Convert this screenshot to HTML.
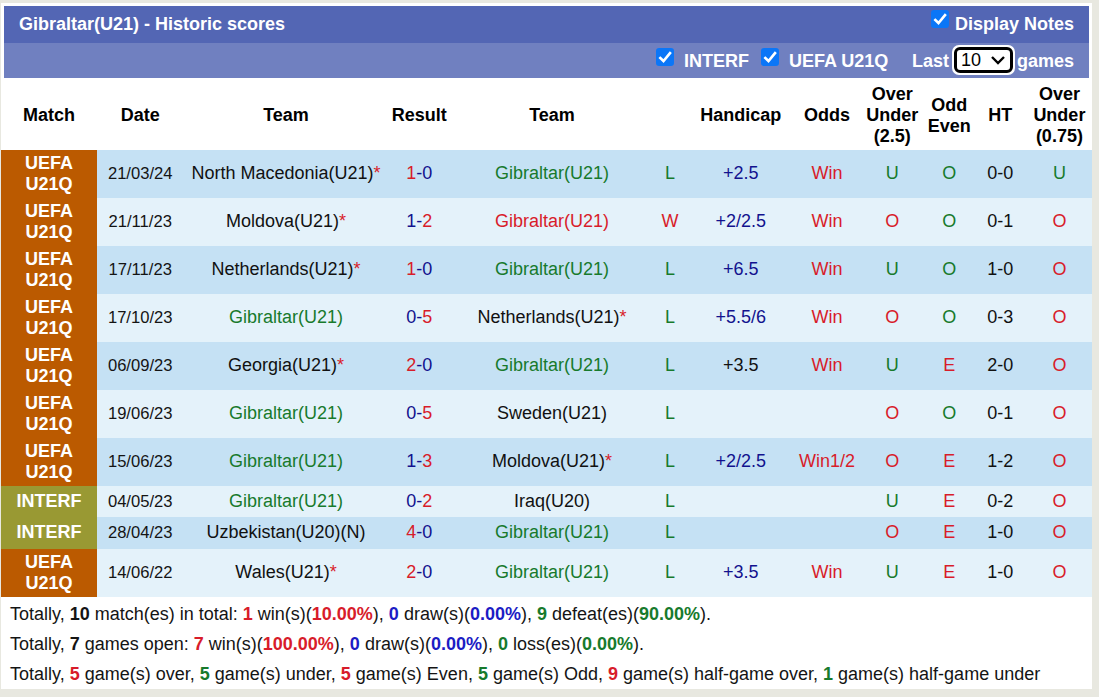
<!DOCTYPE html>
<html><head><meta charset="utf-8"><title>Gibraltar(U21) - Historic scores</title>
<style>
html,body{margin:0;padding:0}
body{width:1099px;height:697px;overflow:hidden;background:#e8e8e0;position:relative;font-family:"Liberation Sans",sans-serif;font-size:18px;color:#141414}
div{position:absolute}
.box{left:1px;top:3px;width:1091px;height:686px;background:#fff}
.bar1{left:4px;top:6px;width:1085px;height:37px;background:#5366b4}
.bar2{left:4px;top:43px;width:1085px;height:35px;background:#7080c0}
.w{color:#fff;font-weight:bold;white-space:nowrap;line-height:21px}
.c{width:300px;text-align:center;white-space:nowrap;line-height:21px}
.hd{font-weight:bold;color:#000}
.row{left:1px;width:1091px}
.lg{left:1px;width:96px;color:#fff;font-weight:bold}
.cb{width:18px;height:18px;border-radius:3px;background:#0b76f7}
.cb svg{position:absolute;left:0;top:0}
.sel{left:952px;top:45px;width:62.5px;height:30px;border-radius:7px;background:#fff}
.sel2{left:953.6px;top:46.8px;width:53px;height:20.5px;border:3px solid #000;border-radius:6px;background:#fff}
.tot{left:10px;white-space:nowrap;line-height:21px}
.tot b{font-weight:bold}
</style></head><body>
<div class="box"></div>
<div class="bar1"></div>
<div class="bar2"></div>
<div class="w" style="left:19px;top:14px">Gibraltar(U21) - Historic scores</div>

<div class="cb" style="left:931px;top:10px"><svg width="18" height="18" viewBox="0 0 18 18"><path d="M4.3 10 L7.5 13 L14 5.2" fill="none" stroke="#fff" stroke-width="2.6" stroke-linecap="square"/></svg></div>
<div class="w" style="left:955px;top:14px">Display Notes</div>
<div class="cb" style="left:656px;top:48px"><svg width="18" height="18" viewBox="0 0 18 18"><path d="M4.3 10 L7.5 13 L14 5.2" fill="none" stroke="#fff" stroke-width="2.6" stroke-linecap="square"/></svg></div>
<div class="w" style="left:684px;top:51px">INTERF</div>
<div class="cb" style="left:761px;top:48px"><svg width="18" height="18" viewBox="0 0 18 18"><path d="M4.3 10 L7.5 13 L14 5.2" fill="none" stroke="#fff" stroke-width="2.6" stroke-linecap="square"/></svg></div>
<div class="w" style="left:789px;top:51px">UEFA U21Q</div>
<div class="w" style="left:912px;top:51px">Last</div>
<div class="sel"></div><div class="sel2"></div>
<div style="left:961px;top:50px;line-height:21px;font-size:18px;color:#000">10</div>
<svg style="position:absolute;left:990px;top:55px" width="16" height="10" viewBox="0 0 16 10"><path d="M2 2 L8 8 L14 2" fill="none" stroke="#000" stroke-width="2.4"/></svg>
<div class="w" style="left:1017px;top:51px">games</div>
<div class="c hd" style="left:-101px;top:105px">Match</div>
<div class="c hd" style="left:-9.800000000000011px;top:105px">Date</div>
<div class="c hd" style="left:136px;top:105px">Team</div>
<div class="c hd" style="left:269.3px;top:105px">Result</div>
<div class="c hd" style="left:402px;top:105px">Team</div>
<div class="c hd" style="left:590.8px;top:105px">Handicap</div>
<div class="c hd" style="left:677px;top:105px">Odds</div>
<div class="c hd" style="left:742.3px;top:84px">Over<br>Under<br>(2.5)</div>
<div class="c hd" style="left:799.3px;top:94.5px">Odd<br>Even</div>
<div class="c hd" style="left:850.3px;top:105px">HT</div>
<div class="c hd" style="left:909.4000000000001px;top:84px">Over<br>Under<br>(0.75)</div>
<div class="row" style="top:150px;height:48px;background:#c5e1f4"></div>
<div class="lg" style="top:150px;height:48px;background:#bb5a00"></div>
<div class="c w" style="left:-101px;top:153.0px;line-height:21px">UEFA<br>U21Q</div>
<div class="c" style="left:-9.800000000000011px;top:163.0px;font-size:16.6px;">21/03/24</div>
<div class="c" style="left:136px;top:163.0px;"><span style="color:#111111">North Macedonia(U21)</span><span style="color:#d81c2a">*</span></div>
<div class="c" style="left:269.3px;top:163.0px;"><span style="color:#d81c2a">1</span><span style="color:#12128e">-0</span></div>
<div class="c" style="left:402px;top:163.0px;"><span style="color:#177a2c">Gibraltar(U21)</span></div>
<div class="c" style="left:520px;top:163.0px;"><span style="color:#177a2c">L</span></div>
<div class="c" style="left:590.8px;top:163.0px;"><span style="color:#12128e">+2.5</span></div>
<div class="c" style="left:677px;top:163.0px;"><span style="color:#d81c2a">Win</span></div>
<div class="c" style="left:742.3px;top:163.0px;"><span style="color:#177a2c">U</span></div>
<div class="c" style="left:799.3px;top:163.0px;"><span style="color:#177a2c">O</span></div>
<div class="c" style="left:850.3px;top:163.0px;"><span style="color:#111111">0-0</span></div>
<div class="c" style="left:909.4000000000001px;top:163.0px;"><span style="color:#177a2c">U</span></div>
<div class="row" style="top:198px;height:48px;background:#e4f2fa"></div>
<div class="lg" style="top:198px;height:48px;background:#bb5a00"></div>
<div class="c w" style="left:-101px;top:201.0px;line-height:21px">UEFA<br>U21Q</div>
<div class="c" style="left:-9.800000000000011px;top:211.0px;font-size:16.6px;">21/11/23</div>
<div class="c" style="left:136px;top:211.0px;"><span style="color:#111111">Moldova(U21)</span><span style="color:#d81c2a">*</span></div>
<div class="c" style="left:269.3px;top:211.0px;"><span style="color:#12128e">1-</span><span style="color:#d81c2a">2</span></div>
<div class="c" style="left:402px;top:211.0px;"><span style="color:#d81c2a">Gibraltar(U21)</span></div>
<div class="c" style="left:520px;top:211.0px;"><span style="color:#d81c2a">W</span></div>
<div class="c" style="left:590.8px;top:211.0px;"><span style="color:#12128e">+2/2.5</span></div>
<div class="c" style="left:677px;top:211.0px;"><span style="color:#d81c2a">Win</span></div>
<div class="c" style="left:742.3px;top:211.0px;"><span style="color:#d81c2a">O</span></div>
<div class="c" style="left:799.3px;top:211.0px;"><span style="color:#177a2c">O</span></div>
<div class="c" style="left:850.3px;top:211.0px;"><span style="color:#111111">0-1</span></div>
<div class="c" style="left:909.4000000000001px;top:211.0px;"><span style="color:#d81c2a">O</span></div>
<div class="row" style="top:246px;height:48px;background:#c5e1f4"></div>
<div class="lg" style="top:246px;height:48px;background:#bb5a00"></div>
<div class="c w" style="left:-101px;top:249.0px;line-height:21px">UEFA<br>U21Q</div>
<div class="c" style="left:-9.800000000000011px;top:259.0px;font-size:16.6px;">17/11/23</div>
<div class="c" style="left:136px;top:259.0px;"><span style="color:#111111">Netherlands(U21)</span><span style="color:#d81c2a">*</span></div>
<div class="c" style="left:269.3px;top:259.0px;"><span style="color:#d81c2a">1</span><span style="color:#12128e">-0</span></div>
<div class="c" style="left:402px;top:259.0px;"><span style="color:#177a2c">Gibraltar(U21)</span></div>
<div class="c" style="left:520px;top:259.0px;"><span style="color:#177a2c">L</span></div>
<div class="c" style="left:590.8px;top:259.0px;"><span style="color:#12128e">+6.5</span></div>
<div class="c" style="left:677px;top:259.0px;"><span style="color:#d81c2a">Win</span></div>
<div class="c" style="left:742.3px;top:259.0px;"><span style="color:#177a2c">U</span></div>
<div class="c" style="left:799.3px;top:259.0px;"><span style="color:#177a2c">O</span></div>
<div class="c" style="left:850.3px;top:259.0px;"><span style="color:#111111">1-0</span></div>
<div class="c" style="left:909.4000000000001px;top:259.0px;"><span style="color:#d81c2a">O</span></div>
<div class="row" style="top:294px;height:48px;background:#e4f2fa"></div>
<div class="lg" style="top:294px;height:48px;background:#bb5a00"></div>
<div class="c w" style="left:-101px;top:297.0px;line-height:21px">UEFA<br>U21Q</div>
<div class="c" style="left:-9.800000000000011px;top:307.0px;font-size:16.6px;">17/10/23</div>
<div class="c" style="left:136px;top:307.0px;"><span style="color:#177a2c">Gibraltar(U21)</span></div>
<div class="c" style="left:269.3px;top:307.0px;"><span style="color:#12128e">0-</span><span style="color:#d81c2a">5</span></div>
<div class="c" style="left:402px;top:307.0px;"><span style="color:#111111">Netherlands(U21)</span><span style="color:#d81c2a">*</span></div>
<div class="c" style="left:520px;top:307.0px;"><span style="color:#177a2c">L</span></div>
<div class="c" style="left:590.8px;top:307.0px;"><span style="color:#12128e">+5.5/6</span></div>
<div class="c" style="left:677px;top:307.0px;"><span style="color:#d81c2a">Win</span></div>
<div class="c" style="left:742.3px;top:307.0px;"><span style="color:#d81c2a">O</span></div>
<div class="c" style="left:799.3px;top:307.0px;"><span style="color:#177a2c">O</span></div>
<div class="c" style="left:850.3px;top:307.0px;"><span style="color:#111111">0-3</span></div>
<div class="c" style="left:909.4000000000001px;top:307.0px;"><span style="color:#d81c2a">O</span></div>
<div class="row" style="top:342px;height:48px;background:#c5e1f4"></div>
<div class="lg" style="top:342px;height:48px;background:#bb5a00"></div>
<div class="c w" style="left:-101px;top:345.0px;line-height:21px">UEFA<br>U21Q</div>
<div class="c" style="left:-9.800000000000011px;top:355.0px;font-size:16.6px;">06/09/23</div>
<div class="c" style="left:136px;top:355.0px;"><span style="color:#111111">Georgia(U21)</span><span style="color:#d81c2a">*</span></div>
<div class="c" style="left:269.3px;top:355.0px;"><span style="color:#d81c2a">2</span><span style="color:#12128e">-0</span></div>
<div class="c" style="left:402px;top:355.0px;"><span style="color:#177a2c">Gibraltar(U21)</span></div>
<div class="c" style="left:520px;top:355.0px;"><span style="color:#177a2c">L</span></div>
<div class="c" style="left:590.8px;top:355.0px;"><span style="color:#111111">+3.5</span></div>
<div class="c" style="left:677px;top:355.0px;"><span style="color:#d81c2a">Win</span></div>
<div class="c" style="left:742.3px;top:355.0px;"><span style="color:#177a2c">U</span></div>
<div class="c" style="left:799.3px;top:355.0px;"><span style="color:#d81c2a">E</span></div>
<div class="c" style="left:850.3px;top:355.0px;"><span style="color:#111111">2-0</span></div>
<div class="c" style="left:909.4000000000001px;top:355.0px;"><span style="color:#d81c2a">O</span></div>
<div class="row" style="top:390px;height:48px;background:#e4f2fa"></div>
<div class="lg" style="top:390px;height:48px;background:#bb5a00"></div>
<div class="c w" style="left:-101px;top:393.0px;line-height:21px">UEFA<br>U21Q</div>
<div class="c" style="left:-9.800000000000011px;top:403.0px;font-size:16.6px;">19/06/23</div>
<div class="c" style="left:136px;top:403.0px;"><span style="color:#177a2c">Gibraltar(U21)</span></div>
<div class="c" style="left:269.3px;top:403.0px;"><span style="color:#12128e">0-</span><span style="color:#d81c2a">5</span></div>
<div class="c" style="left:402px;top:403.0px;"><span style="color:#111111">Sweden(U21)</span></div>
<div class="c" style="left:520px;top:403.0px;"><span style="color:#177a2c">L</span></div>
<div class="c" style="left:742.3px;top:403.0px;"><span style="color:#d81c2a">O</span></div>
<div class="c" style="left:799.3px;top:403.0px;"><span style="color:#177a2c">O</span></div>
<div class="c" style="left:850.3px;top:403.0px;"><span style="color:#111111">0-1</span></div>
<div class="c" style="left:909.4000000000001px;top:403.0px;"><span style="color:#d81c2a">O</span></div>
<div class="row" style="top:438px;height:48px;background:#c5e1f4"></div>
<div class="lg" style="top:438px;height:48px;background:#bb5a00"></div>
<div class="c w" style="left:-101px;top:441.0px;line-height:21px">UEFA<br>U21Q</div>
<div class="c" style="left:-9.800000000000011px;top:451.0px;font-size:16.6px;">15/06/23</div>
<div class="c" style="left:136px;top:451.0px;"><span style="color:#177a2c">Gibraltar(U21)</span></div>
<div class="c" style="left:269.3px;top:451.0px;"><span style="color:#12128e">1-</span><span style="color:#d81c2a">3</span></div>
<div class="c" style="left:402px;top:451.0px;"><span style="color:#111111">Moldova(U21)</span><span style="color:#d81c2a">*</span></div>
<div class="c" style="left:520px;top:451.0px;"><span style="color:#177a2c">L</span></div>
<div class="c" style="left:590.8px;top:451.0px;"><span style="color:#12128e">+2/2.5</span></div>
<div class="c" style="left:677px;top:451.0px;"><span style="color:#d81c2a">Win1/2</span></div>
<div class="c" style="left:742.3px;top:451.0px;"><span style="color:#d81c2a">O</span></div>
<div class="c" style="left:799.3px;top:451.0px;"><span style="color:#d81c2a">E</span></div>
<div class="c" style="left:850.3px;top:451.0px;"><span style="color:#111111">1-2</span></div>
<div class="c" style="left:909.4000000000001px;top:451.0px;"><span style="color:#d81c2a">O</span></div>
<div class="row" style="top:486px;height:31px;background:#e4f2fa"></div>
<div class="lg" style="top:486px;height:31px;background:#999933"></div>
<div class="c w" style="left:-101px;top:491px">INTERF</div>
<div class="c" style="left:-9.800000000000011px;top:491.0px;font-size:16.6px;">04/05/23</div>
<div class="c" style="left:136px;top:491.0px;"><span style="color:#177a2c">Gibraltar(U21)</span></div>
<div class="c" style="left:269.3px;top:491.0px;"><span style="color:#12128e">0-</span><span style="color:#d81c2a">2</span></div>
<div class="c" style="left:402px;top:491.0px;"><span style="color:#111111">Iraq(U20)</span></div>
<div class="c" style="left:520px;top:491.0px;"><span style="color:#177a2c">L</span></div>
<div class="c" style="left:742.3px;top:491.0px;"><span style="color:#177a2c">U</span></div>
<div class="c" style="left:799.3px;top:491.0px;"><span style="color:#d81c2a">E</span></div>
<div class="c" style="left:850.3px;top:491.0px;"><span style="color:#111111">0-2</span></div>
<div class="c" style="left:909.4000000000001px;top:491.0px;"><span style="color:#d81c2a">O</span></div>
<div class="row" style="top:517px;height:32px;background:#c5e1f4"></div>
<div class="lg" style="top:517px;height:32px;background:#999933"></div>
<div class="c w" style="left:-101px;top:522px">INTERF</div>
<div class="c" style="left:-9.800000000000011px;top:522.0px;font-size:16.6px;">28/04/23</div>
<div class="c" style="left:136px;top:522.0px;"><span style="color:#111111">Uzbekistan(U20)(N)</span></div>
<div class="c" style="left:269.3px;top:522.0px;"><span style="color:#d81c2a">4</span><span style="color:#12128e">-0</span></div>
<div class="c" style="left:402px;top:522.0px;"><span style="color:#177a2c">Gibraltar(U21)</span></div>
<div class="c" style="left:520px;top:522.0px;"><span style="color:#177a2c">L</span></div>
<div class="c" style="left:742.3px;top:522.0px;"><span style="color:#d81c2a">O</span></div>
<div class="c" style="left:799.3px;top:522.0px;"><span style="color:#d81c2a">E</span></div>
<div class="c" style="left:850.3px;top:522.0px;"><span style="color:#111111">1-0</span></div>
<div class="c" style="left:909.4000000000001px;top:522.0px;"><span style="color:#d81c2a">O</span></div>
<div class="row" style="top:549px;height:48px;background:#e4f2fa"></div>
<div class="lg" style="top:549px;height:48px;background:#bb5a00"></div>
<div class="c w" style="left:-101px;top:552.0px;line-height:21px">UEFA<br>U21Q</div>
<div class="c" style="left:-9.800000000000011px;top:562.0px;font-size:16.6px;">14/06/22</div>
<div class="c" style="left:136px;top:562.0px;"><span style="color:#111111">Wales(U21)</span><span style="color:#d81c2a">*</span></div>
<div class="c" style="left:269.3px;top:562.0px;"><span style="color:#d81c2a">2</span><span style="color:#12128e">-0</span></div>
<div class="c" style="left:402px;top:562.0px;"><span style="color:#177a2c">Gibraltar(U21)</span></div>
<div class="c" style="left:520px;top:562.0px;"><span style="color:#177a2c">L</span></div>
<div class="c" style="left:590.8px;top:562.0px;"><span style="color:#12128e">+3.5</span></div>
<div class="c" style="left:677px;top:562.0px;"><span style="color:#d81c2a">Win</span></div>
<div class="c" style="left:742.3px;top:562.0px;"><span style="color:#177a2c">U</span></div>
<div class="c" style="left:799.3px;top:562.0px;"><span style="color:#d81c2a">E</span></div>
<div class="c" style="left:850.3px;top:562.0px;"><span style="color:#111111">1-0</span></div>
<div class="c" style="left:909.4000000000001px;top:562.0px;"><span style="color:#d81c2a">O</span></div>
<div class="tot" style="top:604px">Totally, <b>10</b> match(es) in total: <b style="color:#d81c2a">1</b> win(s)(<b style="color:#d81c2a">10.00%</b>), <b style="color:#1c1cc4">0</b> draw(s)(<b style="color:#1c1cc4">0.00%</b>), <b style="color:#177a2c">9</b> defeat(es)(<b style="color:#177a2c">90.00%</b>).</div>
<div class="tot" style="top:634px">Totally, <b>7</b> games open: <b style="color:#d81c2a">7</b> win(s)(<b style="color:#d81c2a">100.00%</b>), <b style="color:#1c1cc4">0</b> draw(s)(<b style="color:#1c1cc4">0.00%</b>), <b style="color:#177a2c">0</b> loss(es)(<b style="color:#177a2c">0.00%</b>).</div>
<div class="tot" style="top:664px">Totally, <b style="color:#d81c2a">5</b> game(s) over, <b style="color:#177a2c">5</b> game(s) under, <b style="color:#d81c2a">5</b> game(s) Even, <b style="color:#177a2c">5</b> game(s) Odd, <b style="color:#d81c2a">9</b> game(s) half-game over, <b style="color:#177a2c">1</b> game(s) half-game under</div>
</body></html>
